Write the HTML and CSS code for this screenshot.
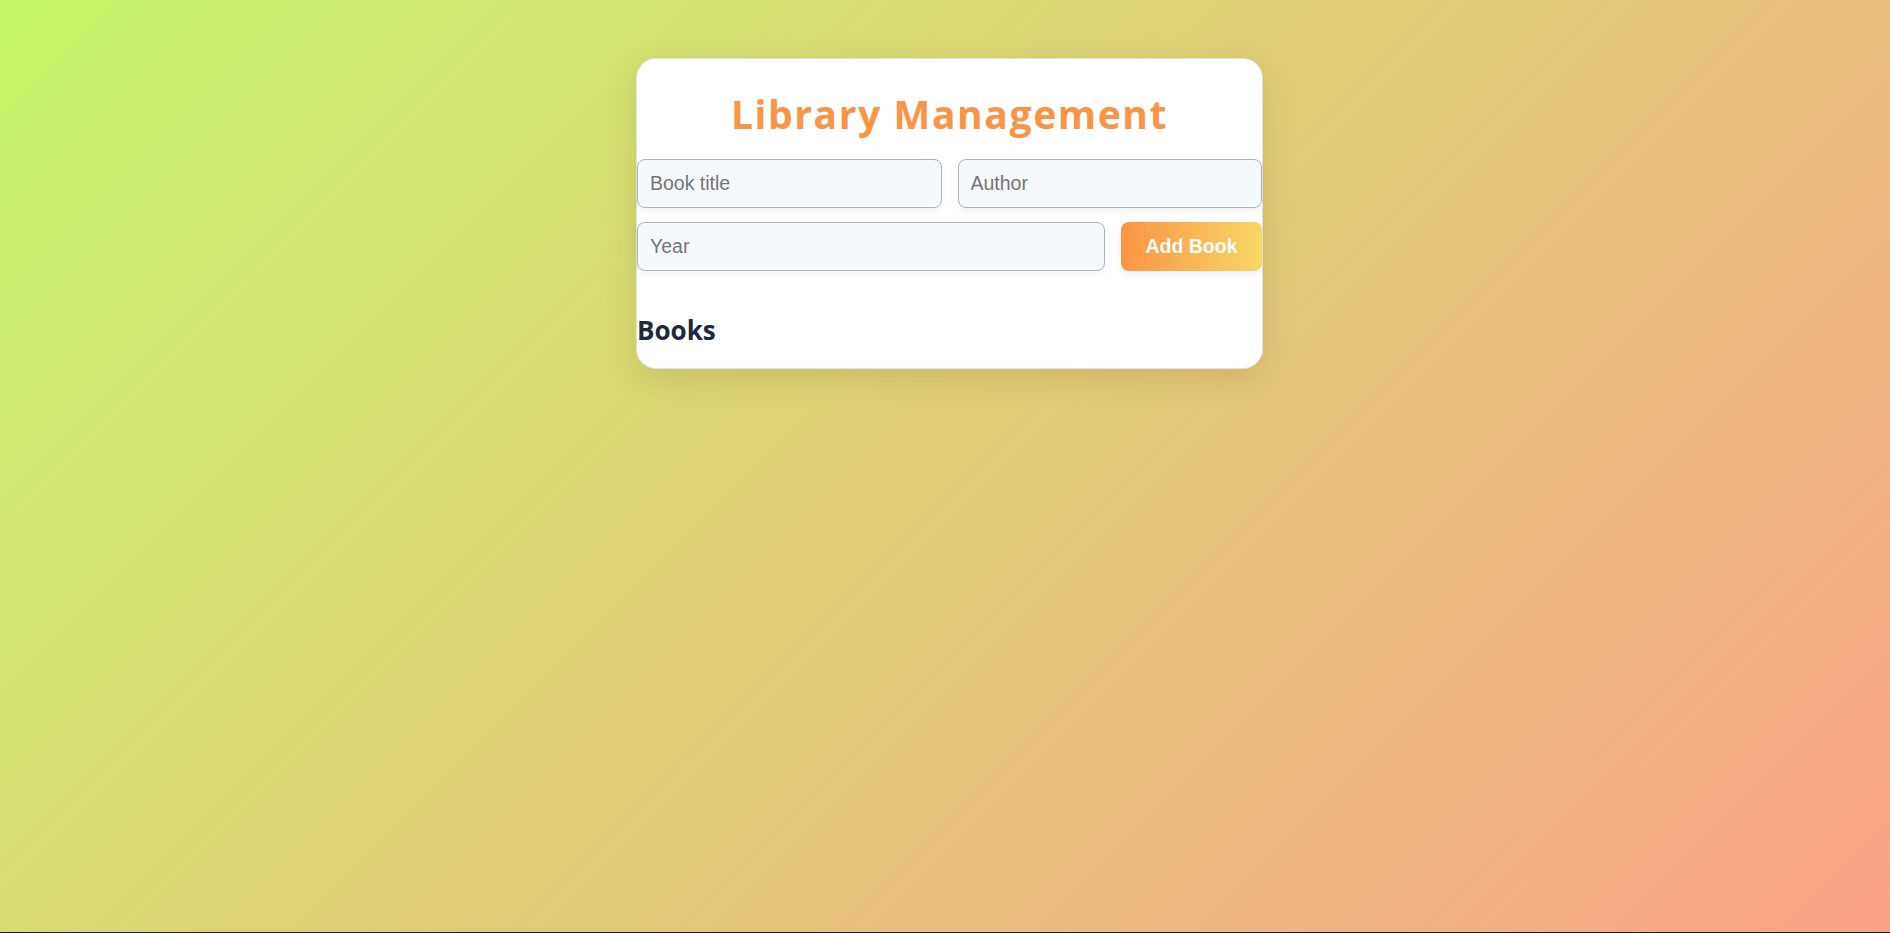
FILE: index.html
```html
<!DOCTYPE html>
<html lang="en">
<head>
<meta charset="utf-8">
<title>Library Management</title>
<link rel="stylesheet" href="styles.css">
</head>
<body>
  <main class="card">
    <h1 class="title">Library Management</h1>
    <form class="book-form">
      <div class="row row-two">
        <input class="field" type="text" placeholder="Book title">
        <input class="field" type="text" placeholder="Author">
      </div>
      <div class="row row-year">
        <input class="field field-grow" type="text" placeholder="Year">
        <button class="add-btn" type="button">Add Book</button>
      </div>
    </form>
    <h2 class="list-title">Books</h2>
  </main>
</body>
</html>
```

FILE: styles.css
```css
html {
  background: #1f1f1f;
}

body {
  margin: 0;
  min-height: 932px;
  box-sizing: border-box;
  padding: 58px 0 0 9px;
  background: linear-gradient(135deg, #c6f66a 0%, #fba286 100%);
  display: flex;
  justify-content: center;
  align-items: flex-start;
  font-family: "Liberation Sans", Arial, sans-serif;
}

.card {
  width: 627px;
  box-sizing: border-box;
  background: #ffffff;
  border: 1px solid #dfe3e8;
  border-radius: 20px;
  box-shadow: 0 10px 30px rgba(120, 100, 40, 0.18);
  padding: 31px 0 22px;
}

.title {
  margin: 0 0 21px;
  text-align: center;
  font-family: "Open Sans", "Noto Sans", sans-serif;
  font-weight: 700;
  font-size: 39px;
  line-height: 48px;
  letter-spacing: 1.6px;
  color: #fb9445;
}

.book-form {
  display: flex;
  flex-direction: column;
  gap: 14px;
}

.row {
  display: flex;
  gap: 16px;
}

.row-two .field {
  flex: 1 1 0;
  min-width: 0;
}

.field {
  height: 49px;
  box-sizing: border-box;
  padding: 0 12px;
  border: 1px solid #aab5c2;
  border-radius: 8px;
  background: #f6f9fc;
  font-family: "Liberation Sans", Arial, sans-serif;
  font-size: 19.5px;
  color: #333;
  box-shadow: 0 3px 6px rgba(0, 0, 0, 0.05);
  outline: none;
}

.field::placeholder {
  color: #757575;
}

.field-grow {
  flex: 1 1 0;
  min-width: 0;
}

.add-btn {
  width: 141px;
  height: 49px;
  border: none;
  border-radius: 8px;
  background: linear-gradient(90deg, #fb9443 0%, #f7d766 100%);
  color: #ffffff;
  font-family: "Liberation Sans", Arial, sans-serif;
  font-weight: 700;
  font-size: 19.5px;
  cursor: pointer;
  box-shadow: 0 3px 8px rgba(0, 0, 0, 0.06);
}

.list-title {
  margin: 43px 0 0;
  font-family: "Open Sans", "Noto Sans", sans-serif;
  font-weight: 700;
  font-size: 26px;
  line-height: 32px;
  color: #1e293b;
}
```
